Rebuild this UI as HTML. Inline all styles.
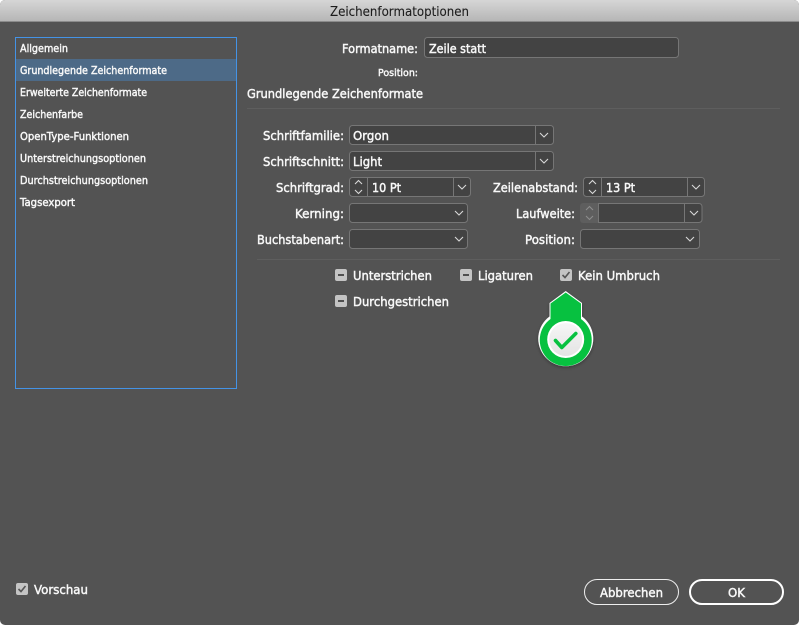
<!DOCTYPE html>
<html><head><meta charset="utf-8">
<style>
html,body{margin:0;padding:0;background:#fff;width:799px;height:625px;overflow:hidden}
svg{display:block}
text{font-family:"DejaVu Sans",sans-serif;fill:#f8f8f8;font-size:12px;stroke:#f8f8f8;stroke-width:.45;}
.f{fill:#434343;stroke:#767676;stroke-width:1}
.d{stroke:#767676;stroke-width:1}
.a{fill:none;stroke:#d8d8d8;stroke-width:1.1}
</style></head><body>
<svg width="799" height="625" viewBox="0 0 799 625" xmlns="http://www.w3.org/2000/svg">
<defs><linearGradient id="t" x1="0" y1="0" x2="0" y2="1"><stop offset="0" stop-color="#d6d6d6"/><stop offset="1" stop-color="#b6b6b6"/></linearGradient>
<linearGradient id="g" x1="0" y1="0" x2="0" y2="1"><stop offset="0" stop-color="#f6f6f6"/><stop offset="1" stop-color="#e4e4e4"/></linearGradient>
<filter id="s" x="-30%" y="-30%" width="160%" height="160%"><feDropShadow dx="0" dy="1.500" stdDeviation="1.500" flood-color="#000" flood-opacity=".3"/></filter></defs>
<rect x="0" y="0" width="799" height="625" rx="5" fill="#535353"/>
<path d="M0 21V5a5 5 0 0 1 5-5H794a5 5 0 0 1 5 5V21Z" fill="url(#t)"/>
<rect x="0" y="21" width="799" height="1" fill="#8b8b8b"/>
<text x="330" y="16" textLength="139" lengthAdjust="spacingAndGlyphs" style="fill:#1c1c1c;stroke:#1c1c1c;stroke-width:.1;font-size:13px">Zeichenformatoptionen</text>

<rect x="15.5" y="37.5" width="221" height="351" fill="#535353" stroke="#4493e6"/>
<rect x="16" y="59" width="220" height="22" fill="#4d6a87"/>
<g>
<text x="20" y="52" textLength="48" lengthAdjust="spacingAndGlyphs" style="font-size:11px">Allgemein</text>
<text x="20" y="74" textLength="147" lengthAdjust="spacingAndGlyphs" style="font-size:11px">Grundlegende Zeichenformate</text>
<text x="20" y="96" textLength="127" lengthAdjust="spacingAndGlyphs" style="font-size:11px">Erweiterte Zeichenformate</text>
<text x="20" y="118" textLength="63" lengthAdjust="spacingAndGlyphs" style="font-size:11px">Zeichenfarbe</text>
<text x="20" y="140" textLength="109" lengthAdjust="spacingAndGlyphs" style="font-size:11px">OpenType-Funktionen</text>
<text x="20" y="162" textLength="126" lengthAdjust="spacingAndGlyphs" style="font-size:11px">Unterstreichungsoptionen</text>
<text x="20" y="184" textLength="128" lengthAdjust="spacingAndGlyphs" style="font-size:11px">Durchstreichungsoptionen</text>
<text x="20" y="206" textLength="55" lengthAdjust="spacingAndGlyphs" style="font-size:11px">Tagsexport</text>
</g>

<text x="342" y="53" textLength="76" lengthAdjust="spacingAndGlyphs">Formatname:</text>
<rect class="f" x="424.5" y="37.5" width="254" height="20" rx="3"/>
<text x="429" y="53" textLength="57" lengthAdjust="spacingAndGlyphs">Zeile statt</text>
<text x="378" y="76" textLength="40" lengthAdjust="spacingAndGlyphs" style="font-size:10px">Position:</text>
<text x="247" y="98" textLength="176" lengthAdjust="spacingAndGlyphs">Grundlegende Zeichenformate</text>
<rect x="247" y="108" width="533" height="1" fill="#5e5e5e"/>

<text x="263" y="140" textLength="81" lengthAdjust="spacingAndGlyphs">Schriftfamilie:</text>
<rect class="f" x="349.5" y="125.5" width="204" height="19" rx="3"/>
<path class="d" d="M535.5 125v20"/>
<path class="a" d="M540 133l4 4 4-4"/>
<text x="353" y="140" textLength="36" lengthAdjust="spacingAndGlyphs">Orgon</text>

<text x="263" y="166" textLength="81" lengthAdjust="spacingAndGlyphs">Schriftschnitt:</text>
<rect class="f" x="349.5" y="151.5" width="204" height="19" rx="3"/>
<path class="d" d="M535.5 151v20"/>
<path class="a" d="M540 159l4 4 4-4"/>
<text x="353" y="166" textLength="29" lengthAdjust="spacingAndGlyphs">Light</text>

<text x="276" y="192" textLength="68" lengthAdjust="spacingAndGlyphs">Schriftgrad:</text>
<rect class="f" x="349.5" y="177.5" width="121" height="19" rx="3"/>
<path class="d" d="M367.5 177v20M453.5 177v20"/>
<path class="a" d="M355 184l3.500-3.500 3.500 3.500M355 190l3.500 3.500 3.500-3.500M458 185l4 4 4-4"/>
<text x="372" y="192" textLength="29" lengthAdjust="spacingAndGlyphs">10 Pt</text>

<text x="295" y="218" textLength="49" lengthAdjust="spacingAndGlyphs">Kerning:</text>
<rect class="f" x="349.5" y="203.500" width="118" height="19" rx="3"/>
<path class="a" d="M455 211l4 4 4-4"/>

<text x="257" y="244" textLength="87" lengthAdjust="spacingAndGlyphs">Buchstabenart:</text>
<rect class="f" x="349.5" y="229.5" width="118" height="19" rx="3"/>
<path class="a" d="M455 237l4 4 4-4"/>

<text x="493" y="192" textLength="85" lengthAdjust="spacingAndGlyphs">Zeilenabstand:</text>
<rect class="f" x="583.5" y="177.5" width="121" height="19" rx="3"/>
<path class="d" d="M601.5 177v20M687.5 177v20"/>
<path class="a" d="M589 184l3.500-3.500 3.500 3.500M589 190l3.500 3.500 3.500-3.500M692 185l4 4 4-4"/>
<text x="606" y="192" textLength="29" lengthAdjust="spacingAndGlyphs">13 Pt</text>

<text x="516" y="218" textLength="59" lengthAdjust="spacingAndGlyphs">Laufweite:</text>
<path d="M583 203h15v20h-15a3 3 0 0 1-3-3v-14a3 3 0 0 1 3-3Z" fill="#5e5e5e"/>
<path d="M598.5 203.5H699a3 3 0 0 1 3 3v13a3 3 0 0 1-3 3H598.5Z" class="f"/>
<path class="d" d="M684.500 203v20"/>
<path d="M586 210l3.500-3.500 3.500 3.500M586 216l3.500 3.500 3.500-3.500" fill="none" stroke="#8d8d8d" stroke-width="1.100"/>
<path class="a" d="M690 211l4 4 4-4"/>

<text x="525" y="244" textLength="50" lengthAdjust="spacingAndGlyphs">Position:</text>
<rect class="f" x="580.5" y="229.5" width="119" height="19" rx="3"/>
<path class="a" d="M686 237l4 4 4-4"/>

<rect x="257" y="259" width="523" height="1" fill="#5e5e5e"/>

<rect x="335" y="269" width="12" height="12" rx="2" fill="#c4c4c4"/><rect x="338" y="274" width="6" height="2" fill="#4f4f4f"/>
<text x="353" y="280" textLength="79" lengthAdjust="spacingAndGlyphs">Unterstrichen</text>
<rect x="460" y="269" width="12" height="12" rx="2" fill="#c4c4c4"/><rect x="463" y="274" width="6" height="2" fill="#4f4f4f"/>
<text x="478" y="280" textLength="55" lengthAdjust="spacingAndGlyphs">Ligaturen</text>
<rect x="560" y="269" width="12" height="12" rx="2" fill="#c4c4c4"/><path d="M562.500 275l2.500 2.500 4.500-5.500" fill="none" stroke="#555" stroke-width="1.600"/>
<text x="578" y="280" textLength="82" lengthAdjust="spacingAndGlyphs">Kein Umbruch</text>
<rect x="335" y="295" width="12" height="12" rx="2" fill="#c4c4c4"/><rect x="338" y="300" width="6" height="2" fill="#4f4f4f"/>
<text x="353" y="306" textLength="96" lengthAdjust="spacingAndGlyphs">Durchgestrichen</text>

<g filter="url(#s)">
<path d="M565.700 291L582 303V316.500A27.500 27.500 0 1 1 549.500 316.500V303Z" fill="#fff"/>
</g>
<path d="M565.700 292.500L581 303.500V319A26 26 0 1 1 550.500 319V303.500Z" fill="#07c140"/>
<circle cx="565.700" cy="339.500" r="18.500" fill="#fff"/>
<circle cx="565.700" cy="339.500" r="16.500" fill="url(#g)"/>
<path d="M555.500 340.500l6.300 7 14-14" fill="none" stroke="#07c140" stroke-width="3.600" stroke-linecap="round" stroke-linejoin="round"/>

<rect x="16" y="583" width="12" height="12" rx="2" fill="#c4c4c4"/><path d="M18.500 589l2.500 2.500 4.500-5.500" fill="none" stroke="#555" stroke-width="1.600"/>
<text x="34" y="594" textLength="54" lengthAdjust="spacingAndGlyphs">Vorschau</text>

<rect x="584.500" y="579.500" width="94" height="25" rx="12.500" fill="none" stroke="#eee" stroke-width="1"/>
<text x="600" y="597" textLength="63" lengthAdjust="spacingAndGlyphs">Abbrechen</text>
<rect x="690" y="580" width="93" height="24" rx="12" fill="none" stroke="#fff" stroke-width="2"/>
<text x="728" y="597" textLength="17" lengthAdjust="spacingAndGlyphs">OK</text>
</svg>
</body></html>
